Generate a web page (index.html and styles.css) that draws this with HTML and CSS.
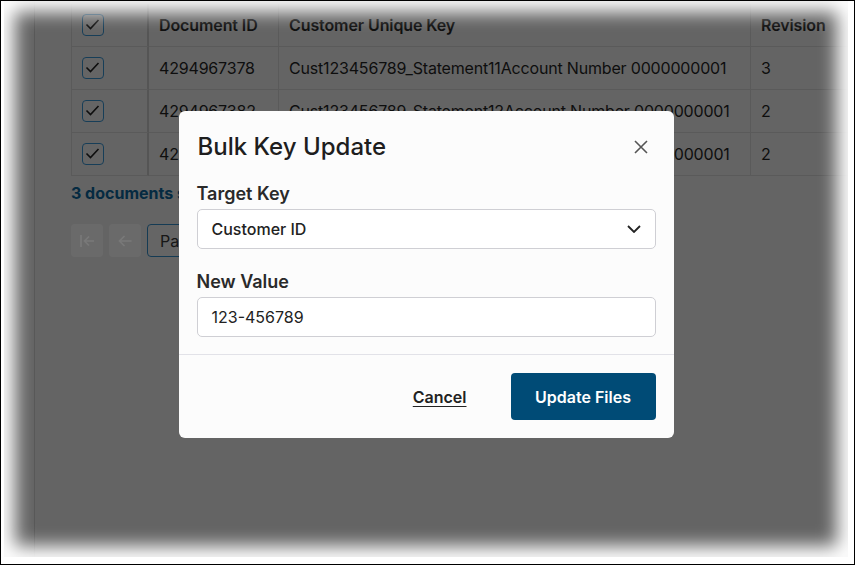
FILE: index.html
```html
<!DOCTYPE html>
<html lang="en">
<head>
    <meta charset="UTF-8">
    <meta name="viewport" content="width=device-width, initial-scale=1.0">
    <title>Bulk Key Update</title>
    <link rel="stylesheet" href="styles.css">
</head>
<body>
    <div class="frame">
        <div class="shot">
            <div class="page">
                <aside class="rail"></aside>
                <main class="content">
                    <table class="docs">
                        <colgroup>
                            <col class="w-check">
                            <col class="w-id">
                            <col class="w-key">
                            <col class="w-rev">
                        </colgroup>
                        <thead>
                            <tr>
                                <th class="cell-check"><span class="check"><svg viewBox="0 0 19 19"><path d="M3.5 9.5l4 4 8-8.5"/></svg></span></th>
                                <th>Document ID</th>
                                <th>Customer Unique Key</th>
                                <th>Revision</th>
                            </tr>
                        </thead>
                        <tbody>
                            <tr>
                                <td class="cell-check"><span class="check"><svg viewBox="0 0 19 19"><path d="M3.5 9.5l4 4 8-8.5"/></svg></span></td>
                                <td>4294967378</td>
                                <td>Cust123456789_Statement11Account Number 0000000001</td>
                                <td>3</td>
                            </tr>
                            <tr>
                                <td class="cell-check"><span class="check"><svg viewBox="0 0 19 19"><path d="M3.5 9.5l4 4 8-8.5"/></svg></span></td>
                                <td>4294967382</td>
                                <td>Cust123456789_Statement12Account Number 0000000001</td>
                                <td>2</td>
                            </tr>
                            <tr>
                                <td class="cell-check"><span class="check"><svg viewBox="0 0 19 19"><path d="M3.5 9.5l4 4 8-8.5"/></svg></span></td>
                                <td>4294967386</td>
                                <td>Cust123456789_Statement13Account Number 0000000001</td>
                                <td>2</td>
                            </tr>
                        </tbody>
                    </table>

                    <p class="selected-count">3 documents selected</p>

                    <div class="pager">
                        <button class="pager-btn" disabled>
                            <svg viewBox="0 0 20 20"><path d="M4 4v12M17 10H7.5M12 5.5L7.5 10l4.5 4.5"/></svg>
                        </button>
                        <button class="pager-btn" disabled>
                            <svg viewBox="0 0 20 20"><path d="M16.5 10H4.5M9.5 5L4.5 10l5 5"/></svg>
                        </button>
                        <div class="pager-input">Page 1 of 1</div>
                    </div>
                </main>
            </div>

            <div class="overlay">
                <div class="modal">
                    <div class="modal-head">
                        <h2>Bulk Key Update</h2>
                        <button class="close" aria-label="Close">
                            <svg viewBox="0 0 14 14"><path d="M1 1l12 12M13 1L1 13"/></svg>
                        </button>
                    </div>

                    <div class="modal-body">
                        <label class="field-label">Target Key</label>
                        <div class="select">
                            <span>Customer ID</span>
                            <svg viewBox="0 0 14 8"><path d="M1 1l6 6 6-6"/></svg>
                        </div>

                        <label class="field-label">New Value</label>
                        <div class="text-input">123-456789</div>
                    </div>

                    <div class="modal-foot">
                        <button class="btn-cancel">Cancel</button>
                        <button class="btn-update">Update Files</button>
                    </div>
                </div>
            </div>
        </div>
    </div>
</body>
</html>
```

FILE: styles.css
```css
* {
    margin: 0;
    padding: 0;
    box-sizing: border-box;
    font-family: 'Inter', 'Noto Sans', sans-serif;
}

body {
    background: #fff;
}

.frame {
    width: 855px;
    height: 565px;
    border: 1px solid #000;
    background: #fff;
    padding: 0 6px 7px 3px;
}

.shot {
    position: relative;
    height: 100%;
    overflow: hidden;
}

/* soft faded edges */
.shot::after {
    content: "";
    position: absolute;
    inset: 0;
    box-shadow: inset 0 0 18px 11px #fff;
    pointer-events: none;
    z-index: 5;
}

.page {
    display: flex;
    height: 100%;
    background: #c9c9c9;
}

.rail {
    width: 31px;
    flex-shrink: 0;
    border-right: 1px solid #afafaf;
}

.content {
    flex: 1;
    padding: 3px 0 0 36px;
    color: #1c1c1c;
}

/* documents table */
.docs {
    table-layout: fixed;
    width: 900px;
    border-collapse: separate;
    border-spacing: 0;
    border-left: 1px solid #b4b4b4;
    font-size: 16px;
}

.w-check { width: 77px; }
.w-id { width: 130px; }
.w-key { width: 472px; }
.w-rev { width: 221px; }

.docs tr {
    height: 43px;
}

.docs th,
.docs td {
    padding: 0 10px;
    text-align: left;
    vertical-align: middle;
    white-space: nowrap;
    border-bottom: 1px solid #b4b4b4;
    border-right: 1px solid #b4b4b4;
}

.docs th {
    font-weight: 600;
    letter-spacing: -0.1px;
}

.docs td {
    font-weight: 400;
    letter-spacing: -0.18px;
}

.docs .cell-check {
    border-right: 2px solid #aaa;
}

.check {
    display: block;
    width: 22px;
    height: 22px;
    border: 1.5px solid #2f7cb0;
    border-radius: 4px;
    background: #cbcbcb;
}

.check svg {
    display: block;
    width: 19px;
    height: 19px;
    fill: none;
    stroke: #1c1c1c;
    stroke-width: 1.6;
}

.selected-count {
    margin-top: 7px;
    font-size: 16px;
    font-weight: 700;
    line-height: 20px;
    color: #0a5583;
}

.pager {
    display: flex;
    gap: 6px;
    margin-top: 21px;
}

.pager-btn {
    width: 32px;
    height: 33px;
    border: none;
    border-radius: 4px;
    background: #d5d5d5;
    display: flex;
    align-items: center;
    justify-content: center;
}

.pager-btn svg {
    width: 20px;
    height: 20px;
    fill: none;
    stroke: #f2f2f2;
    stroke-width: 1.6;
}

.pager-input {
    width: 150px;
    height: 33px;
    border: 1px solid #2b76a8;
    border-radius: 4px;
    padding: 0 12px;
    display: flex;
    align-items: center;
    font-size: 16px;
    color: #2e2e2e;
    background: #cbcbcb;
}

/* modal */
.overlay {
    position: absolute;
    inset: 0;
    background: rgba(0, 0, 0, 0.5);
    display: flex;
    align-items: center;
    justify-content: center;
    padding-bottom: 9px;
    z-index: 2;
}

.modal {
    width: 495px;
    background: #fcfcfc;
    border-radius: 6px;
    color: #222;
}

.modal-head {
    display: flex;
    justify-content: space-between;
    align-items: center;
    padding: 20px 26px 0 19px;
}

.modal-head h2 {
    font-size: 24px;
    font-weight: 500;
    line-height: 32px;
    color: #1e1e1e;
}

.close {
    border: none;
    background: none;
    width: 14px;
    height: 14px;
    display: flex;
}

.close svg {
    width: 14px;
    height: 14px;
    fill: none;
    stroke: #555;
    stroke-width: 1.6;
}

.modal-body {
    padding: 19px 18px 17px 18px;
}

.field-label {
    display: block;
    font-size: 18px;
    font-weight: 600;
    line-height: 24px;
    margin-bottom: 3px;
    color: #2a2a2a;
}

.select,
.text-input {
    height: 40px;
    border: 1px solid #cfcfd4;
    border-radius: 5px;
    background: #fff;
    padding: 0 14px;
    display: flex;
    align-items: center;
    font-size: 16px;
    color: #222;
}

.select {
    justify-content: space-between;
    font-weight: 500;
    margin-bottom: 21px;
}

.select svg {
    width: 14px;
    height: 8px;
    fill: none;
    stroke: #222;
    stroke-width: 1.8;
}

.text-input {
    font-weight: 400;
}

.modal-foot {
    border-top: 1px solid #e2e2e8;
    display: flex;
    justify-content: flex-end;
    align-items: center;
    gap: 44px;
    padding: 18px 18px 18px;
}

.btn-cancel {
    border: none;
    background: none;
    font-size: 16px;
    font-weight: 600;
    color: #222;
    text-decoration: underline;
    text-underline-offset: 3px;
    cursor: pointer;
}

.btn-update {
    width: 145px;
    height: 47px;
    border: none;
    border-radius: 4px;
    background: #004b76;
    color: #fff;
    font-size: 16px;
    font-weight: 600;
    cursor: pointer;
}
```
